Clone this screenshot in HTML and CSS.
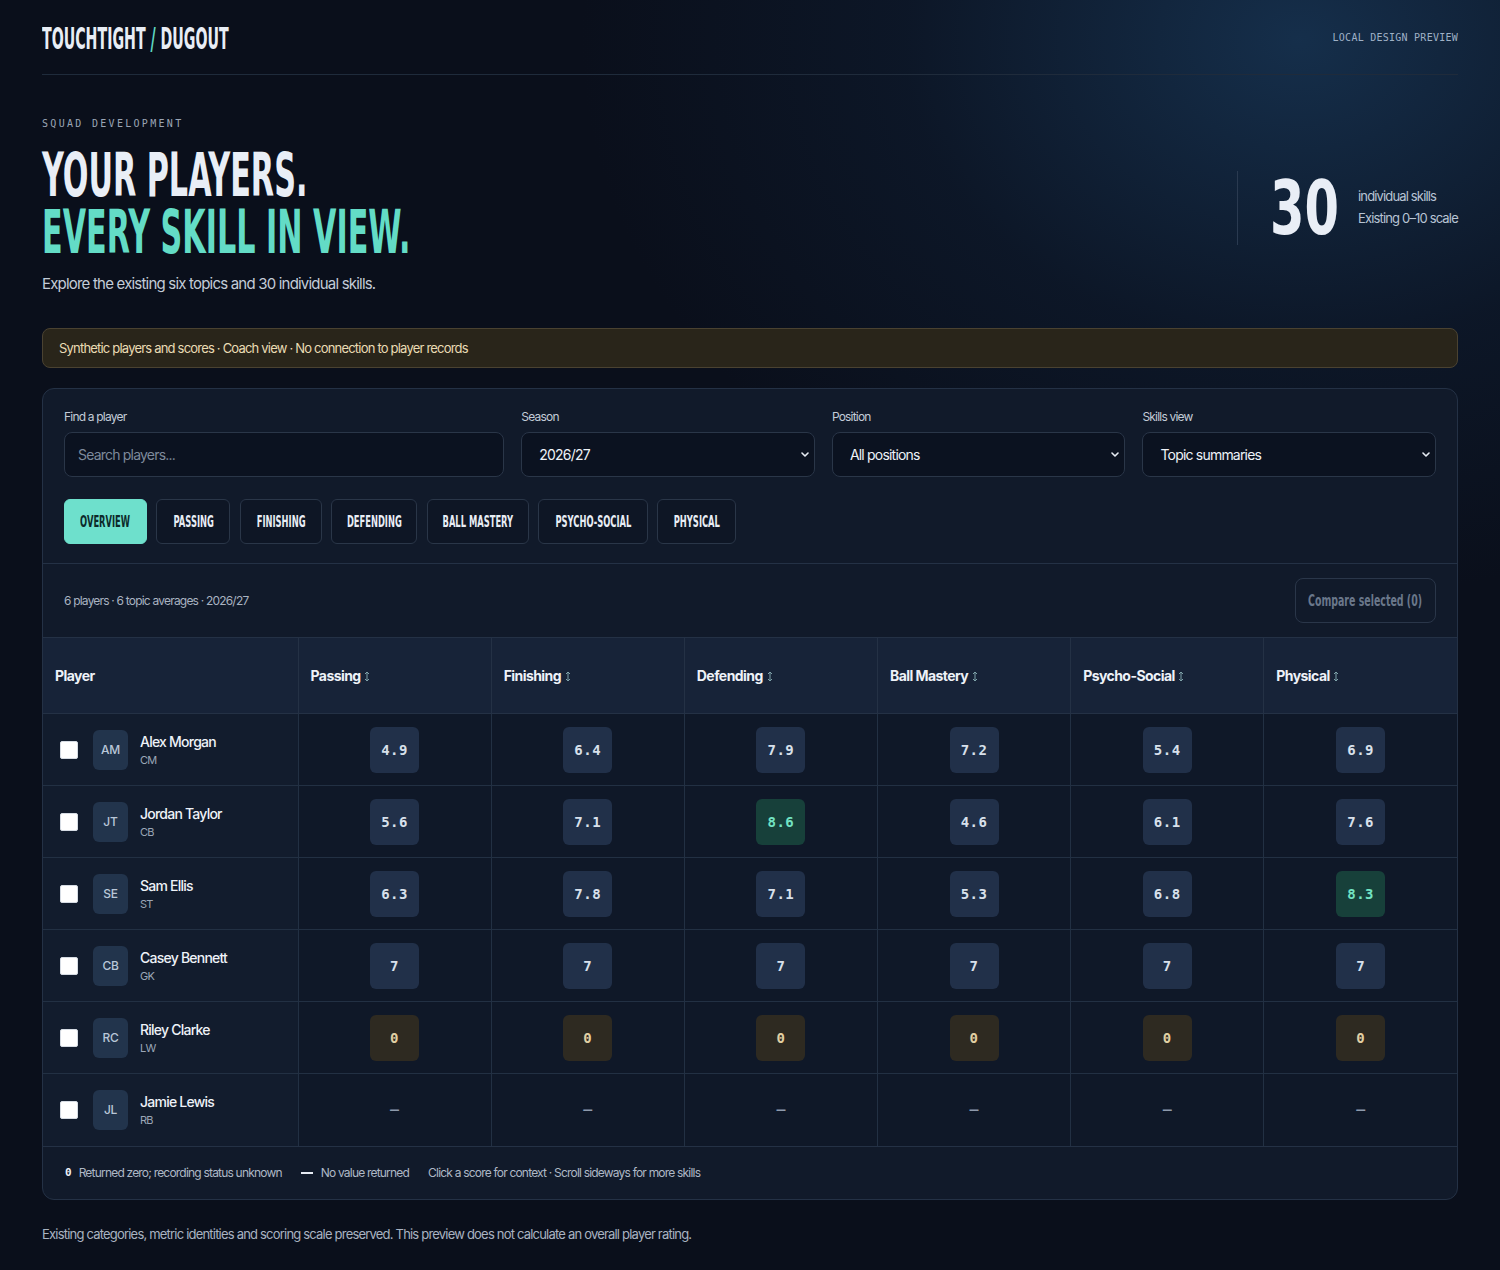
FILE: index.html
```html
<!DOCTYPE html>
<html lang="en">
<head>
<meta charset="utf-8">
<title>Touchtight / Dugout</title>
<link rel="stylesheet" href="styles.css">
</head>
<body>
<div class="page">
  <header class="topbar">
    <div class="logo"><span class="cond">TOUCHTIGHT <em>/</em> DUGOUT</span></div>
    <div class="preview-tag">LOCAL DESIGN PREVIEW</div>
  </header>

  <section class="hero">
    <div class="hero-copy">
      <div class="eyebrow">SQUAD DEVELOPMENT</div>
      <h1 class="headline"><span class="l1">YOUR PLAYERS.</span><span class="l2">EVERY SKILL IN VIEW.</span></h1>
      <p class="lede">Explore the existing six topics and 30 individual skills.</p>
    </div>
    <div class="stat">
      <div class="stat-num"><span>30</span></div>
      <div class="stat-labels">
        <div>individual skills</div>
        <div>Existing 0–10 scale</div>
      </div>
    </div>
  </section>

  <div class="notice">Synthetic players and scores · Coach view · No connection to player records</div>

  <section class="panel">
    <div class="controls">
      <div class="filters">
        <div class="field">
          <div class="field-label">Find a player</div>
          <div class="input placeholder">Search players...</div>
        </div>
        <div class="field">
          <div class="field-label">Season</div>
          <div class="input select"><span>2026/27</span><svg class="chev" viewBox="0 0 8 5" width="8" height="5"><path d="M1 1l3 3 3-3" fill="none" stroke="#e6ebf3" stroke-width="1.6" stroke-linecap="round" stroke-linejoin="round"/></svg></div>
        </div>
        <div class="field">
          <div class="field-label">Position</div>
          <div class="input select"><span>All positions</span><svg class="chev" viewBox="0 0 8 5" width="8" height="5"><path d="M1 1l3 3 3-3" fill="none" stroke="#e6ebf3" stroke-width="1.6" stroke-linecap="round" stroke-linejoin="round"/></svg></div>
        </div>
        <div class="field">
          <div class="field-label">Skills view</div>
          <div class="input select"><span>Topic summaries</span><svg class="chev" viewBox="0 0 8 5" width="8" height="5"><path d="M1 1l3 3 3-3" fill="none" stroke="#e6ebf3" stroke-width="1.6" stroke-linecap="round" stroke-linejoin="round"/></svg></div>
        </div>
      </div>
      <div class="tabs">
        <button class="tab active"><span>OVERVIEW</span></button>
        <button class="tab"><span>PASSING</span></button>
        <button class="tab"><span>FINISHING</span></button>
        <button class="tab"><span>DEFENDING</span></button>
        <button class="tab"><span>BALL MASTERY</span></button>
        <button class="tab"><span>PSYCHO-SOCIAL</span></button>
        <button class="tab"><span>PHYSICAL</span></button>
      </div>
    </div>

    <div class="toolbar">
      <div class="summary">6 players · 6 topic averages · 2026/27</div>
      <button class="compare"><span>Compare selected (0)</span></button>
    </div>

    <table class="grid">
      <colgroup><col class="c-player"><col><col><col><col><col><col></colgroup>
      <thead>
        <tr>
          <th>Player</th>
          <th>Passing <svg class="sort" viewBox="0 0 6 11" width="6" height="11"><path d="M3 1v9M1 3l2-2 2 2M1 8l2 2 2-2" fill="none" stroke="#7fa3aa" stroke-width="1"/></svg></th>
          <th>Finishing <svg class="sort" viewBox="0 0 6 11" width="6" height="11"><path d="M3 1v9M1 3l2-2 2 2M1 8l2 2 2-2" fill="none" stroke="#7fa3aa" stroke-width="1"/></svg></th>
          <th>Defending <svg class="sort" viewBox="0 0 6 11" width="6" height="11"><path d="M3 1v9M1 3l2-2 2 2M1 8l2 2 2-2" fill="none" stroke="#7fa3aa" stroke-width="1"/></svg></th>
          <th>Ball Mastery <svg class="sort" viewBox="0 0 6 11" width="6" height="11"><path d="M3 1v9M1 3l2-2 2 2M1 8l2 2 2-2" fill="none" stroke="#7fa3aa" stroke-width="1"/></svg></th>
          <th>Psycho-Social <svg class="sort" viewBox="0 0 6 11" width="6" height="11"><path d="M3 1v9M1 3l2-2 2 2M1 8l2 2 2-2" fill="none" stroke="#7fa3aa" stroke-width="1"/></svg></th>
          <th>Physical <svg class="sort" viewBox="0 0 6 11" width="6" height="11"><path d="M3 1v9M1 3l2-2 2 2M1 8l2 2 2-2" fill="none" stroke="#7fa3aa" stroke-width="1"/></svg></th>
        </tr>
      </thead>
      <tbody>
        <tr>
          <td class="player"><div class="pcell"><input type="checkbox" class="check"><div class="avatar">AM</div><div class="pinfo"><div class="pname">Alex Morgan</div><div class="ppos">CM</div></div></div></td>
          <td><span class="chip">4.9</span></td><td><span class="chip">6.4</span></td><td><span class="chip">7.9</span></td><td><span class="chip">7.2</span></td><td><span class="chip">5.4</span></td><td><span class="chip">6.9</span></td>
        </tr>
        <tr>
          <td class="player"><div class="pcell"><input type="checkbox" class="check"><div class="avatar">JT</div><div class="pinfo"><div class="pname">Jordan Taylor</div><div class="ppos">CB</div></div></div></td>
          <td><span class="chip">5.6</span></td><td><span class="chip">7.1</span></td><td><span class="chip high">8.6</span></td><td><span class="chip">4.6</span></td><td><span class="chip">6.1</span></td><td><span class="chip">7.6</span></td>
        </tr>
        <tr>
          <td class="player"><div class="pcell"><input type="checkbox" class="check"><div class="avatar">SE</div><div class="pinfo"><div class="pname">Sam Ellis</div><div class="ppos">ST</div></div></div></td>
          <td><span class="chip">6.3</span></td><td><span class="chip">7.8</span></td><td><span class="chip">7.1</span></td><td><span class="chip">5.3</span></td><td><span class="chip">6.8</span></td><td><span class="chip high">8.3</span></td>
        </tr>
        <tr>
          <td class="player"><div class="pcell"><input type="checkbox" class="check"><div class="avatar">CB</div><div class="pinfo"><div class="pname">Casey Bennett</div><div class="ppos">GK</div></div></div></td>
          <td><span class="chip">7</span></td><td><span class="chip">7</span></td><td><span class="chip">7</span></td><td><span class="chip">7</span></td><td><span class="chip">7</span></td><td><span class="chip">7</span></td>
        </tr>
        <tr>
          <td class="player"><div class="pcell"><input type="checkbox" class="check"><div class="avatar">RC</div><div class="pinfo"><div class="pname">Riley Clarke</div><div class="ppos">LW</div></div></div></td>
          <td><span class="chip zero">0</span></td><td><span class="chip zero">0</span></td><td><span class="chip zero">0</span></td><td><span class="chip zero">0</span></td><td><span class="chip zero">0</span></td><td><span class="chip zero">0</span></td>
        </tr>
        <tr>
          <td class="player"><div class="pcell"><input type="checkbox" class="check"><div class="avatar">JL</div><div class="pinfo"><div class="pname">Jamie Lewis</div><div class="ppos">RB</div></div></div></td>
          <td><span class="dash">–</span></td><td><span class="dash">–</span></td><td><span class="dash">–</span></td><td><span class="dash">–</span></td><td><span class="dash">–</span></td><td><span class="dash">–</span></td>
        </tr>
      </tbody>
    </table>

    <div class="legend">
      <div class="legend-item"><span class="lg-zero">0</span>Returned zero; recording status unknown</div>
      <div class="legend-item"><span class="lg-dash"></span>No value returned</div>
      <div class="legend-item">Click a score for context · Scroll sideways for more skills</div>
    </div>
  </section>

  <p class="footnote">Existing categories, metric identities and scoring scale preserved. This preview does not calculate an overall player rating.</p>
</div>
</body>
</html>
```

FILE: styles.css
```css
* { box-sizing: border-box; }

html, body { margin: 0; padding: 0; }

body {
  min-height: 1270px;
  background:
    radial-gradient(ellipse 720px 560px at 1300px 40px, rgba(28, 66, 104, 0.62), rgba(20, 45, 75, 0.25) 55%, rgba(10, 15, 27, 0) 100%),
    #0a0f1b;
  color: #e6ebf3;
  font-family: Inter, "Noto Sans", "Liberation Sans", sans-serif;
  letter-spacing: -0.05em;
}

.page { padding: 0 42px 30px; }

/* ---------- top bar ---------- */
.topbar {
  display: flex;
  justify-content: space-between;
  align-items: center;
  height: 75px;
  padding-top: 4px;
  border-bottom: 1px solid #1f2b3b;
}

.cond {
  display: inline-block;
  font-family: "Liberation Sans Narrow", "DejaVu Sans Condensed", "Liberation Sans", sans-serif;
  font-weight: 700;
  letter-spacing: 0;
  white-space: nowrap;
}

.logo .cond {
  font-size: 30px;
  line-height: 30px;
  color: #e8edf5;
  transform: scaleX(0.525);
  transform-origin: left center;
}
.logo em { font-style: normal; color: #5fd8c2; }

.preview-tag {
  font-family: "DejaVu Sans Mono", "Liberation Mono", monospace;
  font-size: 10px;
  letter-spacing: 0.25px;
  color: #9fb1c6;
  margin-top: -4px;
}

/* ---------- hero ---------- */
.hero {
  display: flex;
  justify-content: space-between;
  align-items: center;
  padding-top: 43px;
}

.eyebrow {
  font-family: "DejaVu Sans Mono", "Liberation Mono", monospace;
  font-size: 10px;
  line-height: 12px;
  letter-spacing: 2.3px;
  color: #9aa5b5;
}

.headline {
  margin: 17px 0 0;
  font-family: "Liberation Sans Narrow", "DejaVu Sans Condensed", "Liberation Sans", sans-serif;
  font-weight: 700;
  font-size: 60px;
  line-height: 57px;
  letter-spacing: 0;
}
.headline span {
  display: block;
  height: 57px;
  white-space: nowrap;
  transform-origin: left center;
}
.headline .l1 { color: #e9eef6; transform: scaleX(0.56); }
.headline .l2 { color: #63dcc6; transform: scaleX(0.56); }

.lede {
  margin: 13px 0 0;
  font-size: 15px;
  line-height: 20px;
  color: #c3ccd8;
}

.stat {
  display: flex;
  align-items: center;
  height: 74px;
  border-left: 1px solid #2a3a50;
  padding-left: 32px;
  margin-top: 4px;
}
.stat-num { width: 88px; flex: none; }
.stat-num span {
  display: inline-block;
  font-family: "Liberation Sans Narrow", "DejaVu Sans Condensed", "Liberation Sans", sans-serif;
  font-weight: 700;
  font-size: 75px;
  line-height: 74px;
  letter-spacing: 0;
  color: #e9eef6;
  transform: scaleX(0.734);
  transform-origin: left center;
}
.stat-labels {
  width: 100px;
  font-size: 13px;
  line-height: 22px;
  letter-spacing: -0.065em;
  color: #b8c4d4;
  margin-top: -2px;
  white-space: nowrap;
}

/* ---------- notice ---------- */
.notice {
  margin-top: 34px;
  height: 40px;
  display: flex;
  align-items: center;
  padding: 0 16px;
  background: #29251a;
  border: 1px solid #4a4231;
  border-radius: 8px;
  font-size: 13px;
  color: #eadcb4;
}

/* ---------- panel ---------- */
.panel {
  margin-top: 20px;
  background: #111a2a;
  border: 1px solid #243145;
  border-radius: 12px;
  overflow: hidden;
}

.controls {
  padding: 21px 21px 19px;
  border-bottom: 1px solid #243145;
}

.filters {
  display: grid;
  grid-template-columns: 1.5fr 1fr 1fr 1fr;
  gap: 17px;
}

.field-label {
  font-size: 12px;
  line-height: 14px;
  color: #c3ccd8;
  margin-bottom: 8px;
}

.input {
  height: 45px;
  display: flex;
  align-items: center;
  justify-content: space-between;
  padding: 0 5px 0 17px;
  background: #0b1220;
  border: 1px solid #2a3648;
  border-radius: 8px;
  font-size: 14px;
  color: #eef2f8;
}
.input.placeholder { color: #7e8a9b; padding-left: 13px; }
.chev { display: block; }

.tabs {
  margin-top: 22px;
  display: grid;
  grid-template-columns: 83px 74px 82px 86px 102px 110px 79px;
  column-gap: 9.4px;
}

.tab {
  height: 45px;
  display: flex;
  align-items: center;
  justify-content: center;
  padding: 0;
  background: #0e1625;
  border: 1px solid #2a3648;
  border-radius: 6px;
  color: #e8edf5;
  cursor: pointer;
  overflow: visible;
}
.tab span {
  display: inline-block;
  flex: none;
  font-family: "Liberation Sans Narrow", "DejaVu Sans Condensed", "Liberation Sans", sans-serif;
  font-weight: 700;
  font-size: 16px;
  letter-spacing: 0;
  white-space: nowrap;
  transform: scaleX(0.58);
  transform-origin: center;
}
.tab.active {
  background: #6ee0cc;
  border-color: #6ee0cc;
  color: #0c2a2a;
}

/* ---------- toolbar ---------- */
.toolbar {
  height: 73px;
  display: flex;
  align-items: center;
  justify-content: space-between;
  padding: 0 21px;
}
.summary { font-size: 12px; color: #a9b3c1; }

.compare {
  width: 141px;
  height: 45px;
  display: flex;
  align-items: center;
  justify-content: center;
  padding: 0;
  background: transparent;
  border: 1px solid #2a3649;
  border-radius: 8px;
  color: #6a778a;
}
.compare span {
  display: inline-block;
  flex: none;
  font-family: "Liberation Sans Narrow", "DejaVu Sans Condensed", "Liberation Sans", sans-serif;
  font-weight: 700;
  font-size: 16px;
  letter-spacing: 0;
  white-space: nowrap;
  transform: scaleX(0.655);
}

/* ---------- table ---------- */
.grid {
  width: 100%;
  table-layout: fixed;
  border-collapse: collapse;
}
.c-player { width: 255px; }

.grid th {
  height: 76px;
  padding: 0 12px;
  text-align: left;
  background: #172338;
  border-top: 1px solid #243145;
  border-bottom: 1px solid #243145;
  border-left: 1px solid #243145;
  font-size: 14px;
  font-weight: 700;
  letter-spacing: -0.04em;
  color: #eef2f8;
  white-space: nowrap;
}
.grid th:first-child { border-left: none; }
.sort { vertical-align: -1px; margin-left: 1px; }

.grid td {
  height: 72px;
  padding: 0;
  text-align: center;
  vertical-align: middle;
  background: #0f1828;
  border-bottom: 1px solid #223043;
  border-left: 1px solid #223043;
}
.grid tbody tr:last-child td { border-bottom: none; }
.grid td.player {
  text-align: left;
  background: #121c2d;
  border-left: none;
}

.pcell {
  display: flex;
  align-items: center;
  padding-left: 17px;
}

.check {
  appearance: none;
  -webkit-appearance: none;
  width: 18px;
  height: 18px;
  margin: 0 15px 0 0;
  background: #ffffff;
  border: 1px solid #d5dbe3;
  border-radius: 2px;
  flex: none;
}

.avatar {
  width: 35px;
  height: 40px;
  flex: none;
  display: flex;
  align-items: center;
  justify-content: center;
  background: #22344c;
  border-radius: 6px;
  font-size: 12px;
  font-weight: 500;
  letter-spacing: -0.02em;
  color: #b9c7d8;
  margin-right: 12px;
}

.pname {
  font-size: 14px;
  line-height: 18px;
  font-weight: 500;
  letter-spacing: -0.055em;
  color: #eef2f8;
}
.ppos {
  font-size: 11px;
  line-height: 14px;
  margin-top: 2px;
  color: #9aa6b6;
}

.chip {
  display: inline-flex;
  align-items: center;
  justify-content: center;
  width: 49px;
  height: 46px;
  border-radius: 6px;
  background: #213049;
  font-family: "DejaVu Sans Mono", "Liberation Mono", monospace;
  font-weight: 700;
  font-size: 14px;
  letter-spacing: 0.5px;
  color: #d8e0eb;
  vertical-align: middle;
}
.chip.high { background: #17403a; color: #72e3c3; }
.chip.zero { background: #2e2a21; color: #e0cfa3; }

.dash { font-size: 18px; color: #8e9aac; letter-spacing: 0; }

/* ---------- legend ---------- */
.legend {
  height: 53px;
  display: flex;
  align-items: center;
  gap: 19px;
  padding: 0 22px;
  border-top: 1px solid #243145;
  font-size: 12px;
  color: #aeb8c6;
}
.legend-item { display: flex; align-items: center; }
.lg-zero {
  font-family: "DejaVu Sans Mono", "Liberation Mono", monospace;
  font-weight: 700;
  font-size: 11px;
  letter-spacing: 0;
  color: #eef2f8;
  margin-right: 7px;
}
.lg-dash {
  display: inline-block;
  width: 12px;
  height: 2px;
  background: #e6ebf3;
  margin-right: 8px;
}

.footnote {
  margin: 25px 0 0;
  font-size: 13px;
  line-height: 18px;
  color: #a9b3c1;
}
```
